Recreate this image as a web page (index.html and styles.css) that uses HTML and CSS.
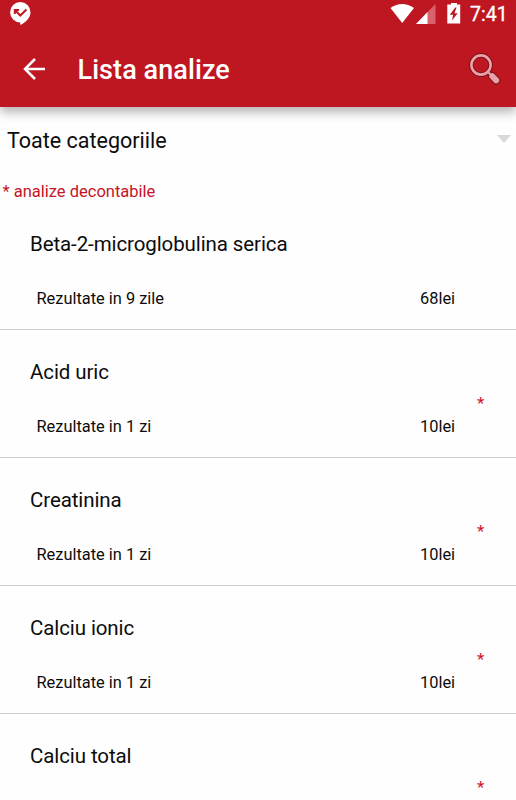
FILE: index.html
```html
<!DOCTYPE html>
<html lang="ro">
<head>
<meta charset="utf-8">
<title>Lista analize</title>
<link rel="stylesheet" href="styles.css">
</head>
<body>
<header class="header">
  <div class="status">
    <svg class="status-app" width="22" height="26" viewBox="0 0 22 26"><path fill="#fff" d="M10.300 2a10.200 10.200 0 0 1 10.200 10.200c0 5.500-4.800 10.200-10.200 12.800v-2.600A10.200 10.200 0 0 1 10.300 2z"/><path fill="none" stroke="#bf1722" stroke-width="2" d="M4.800 10l5.500 5.500 6.200-6M4.800 14V10h4.300"/></svg>
    <div class="status-right">
      <svg class="signals" width="46" height="26" viewBox="0 0 46 26"><path fill="#fff" d="M.5 8Q12 0 24 8L12.200 23z"/><path fill="#d9636b" d="M45.500 4v20H26z"/><path fill="#fff" d="M37.500 12v12H26z"/></svg>
      <svg class="battery" width="14" height="26" viewBox="0 0 14 26"><path fill="#fff" d="M4 3h6v1.500h3.200V23.500H.3V4.500H4z"/><path fill="#bf1722" d="M8.200 7.500L2.800 14.800h3.300L5 20.500l5.700-7.300H7.500L9.500 7.500z"/></svg>
      <span class="time">7:41</span>
    </div>
  </div>
  <div class="toolbar">
    <svg class="back" width="22" height="22" viewBox="0 0 22 22"><path fill="none" stroke="#fff" stroke-width="2.500" d="M22 11H2M12 1L2 11l10 10"/></svg>
    <h1 class="title">Lista analize</h1>
    <svg class="search" width="32" height="32" viewBox="0 0 32 32"><g fill="none" stroke="#7d1018"><circle cx="12" cy="12" r="9.600" stroke-width="4.600"/><path stroke-width="4.500" d="M18 18l4 4"/><path stroke-width="8" stroke-linecap="round" d="M23.300 23.300l3.900 4.100"/></g><g fill="none" stroke="#e9a3a8"><circle cx="12" cy="12" r="9.600" stroke-width="2.600"/><path stroke-width="2.200" d="M18.500 18.500l4 4"/><path stroke-width="6" stroke-linecap="round" d="M23.300 23.300l3.900 4.100"/></g></svg>
  </div>
</header>
<main>
  <div class="category"><span>Toate categoriile</span><svg width="14" height="8" viewBox="0 0 14 8"><path fill="#d8d8d8" d="M0 0h14L7 8z"/></svg></div>
  <p class="note">* analize decontabile</p>
  <ul class="list">
    <li class="row"><h2 class="name">Beta-2-microglobulina serica</h2><div class="details"><span class="result">Rezultate in 9 zile</span><span class="price">68lei</span></div></li>
    <li class="row"><h2 class="name">Acid uric</h2><div class="details"><span class="result">Rezultate in 1 zi</span><span class="price">10lei</span><span class="star">*</span></div></li>
    <li class="row"><h2 class="name">Creatinina</h2><div class="details"><span class="result">Rezultate in 1 zi</span><span class="price">10lei</span><span class="star">*</span></div></li>
    <li class="row"><h2 class="name">Calciu ionic</h2><div class="details"><span class="result">Rezultate in 1 zi</span><span class="price">10lei</span><span class="star">*</span></div></li>
    <li class="row row-last"><h2 class="name">Calciu total</h2><div class="details"><span class="star">*</span></div></li>
  </ul>
</main>
</body>
</html>
```
FILE: styles.css
```css
* { box-sizing: border-box; }
body {
  margin: 0;
  height: 800px;
  overflow: hidden;
  background: #fefefe;
  color: #0c0c0c;
  font-family: Roboto, sans-serif;
}
svg { display: block; flex: none; }
h1, h2, p, ul { margin: 0; padding: 0; font-weight: 400; }
.header {
  position: relative;
  height: 107px;
  background: #bf1722;
  color: #fff;
  box-shadow: 0 5px 10px rgba(0, 0, 0, .3);
}
.status {
  display: flex;
  justify-content: space-between;
  height: 32px;
  padding: 0 9px 0 10px;
}
.status-right { display: flex; }
.signals { margin-right: 11px; }
.time {
  width: 37px;
  margin-left: 9px;
  font-size: 19.5px;
  line-height: 30px;
  -webkit-text-stroke: .3px #fff;
}
.toolbar {
  display: flex;
  align-items: center;
  height: 73px;
  padding: 0 15px 0 23px;
}
.title {
  margin-left: 32.5px;
  padding-top: 4px;
  font-size: 27px;
  font-weight: 500;
  letter-spacing: .08px;
  line-height: 73px;
}
.search { margin-left: auto; }
.category {
  display: flex;
  align-items: center;
  justify-content: space-between;
  height: 66px;
  padding: 0 5px 0 7px;
  font-size: 21.5px;
}
.category svg { margin-bottom: 2px; }
.note {
  height: 29px;
  padding-left: 2.5px;
  color: #c51425;
  font-size: 16.5px;
  line-height: 37px;
}
.list { list-style: none; }
.row {
  height: 128px;
  padding: 26px 30px 0;
  border-bottom: 1px solid #cdcdcd;
}
.row-last {
  height: 86px;
  border-bottom: 0;
}
.name {
  font-size: 20.5px;
  letter-spacing: -.1px;
  line-height: 32px;
}
.details {
  display: grid;
  grid-template-columns: 383.5px 57px 20px;
  margin: 12px 0 0 6.500px;
  height: 54px;
  font-size: 16.4px;
  line-height: 54px;
}
.row-last .details { height: 16px; }
.star {
  grid-column: 3;
  height: 16px;
  margin-top: -5px;
  color: #d0142a;
  font-size: 17px;
  line-height: 16px;
}
```
